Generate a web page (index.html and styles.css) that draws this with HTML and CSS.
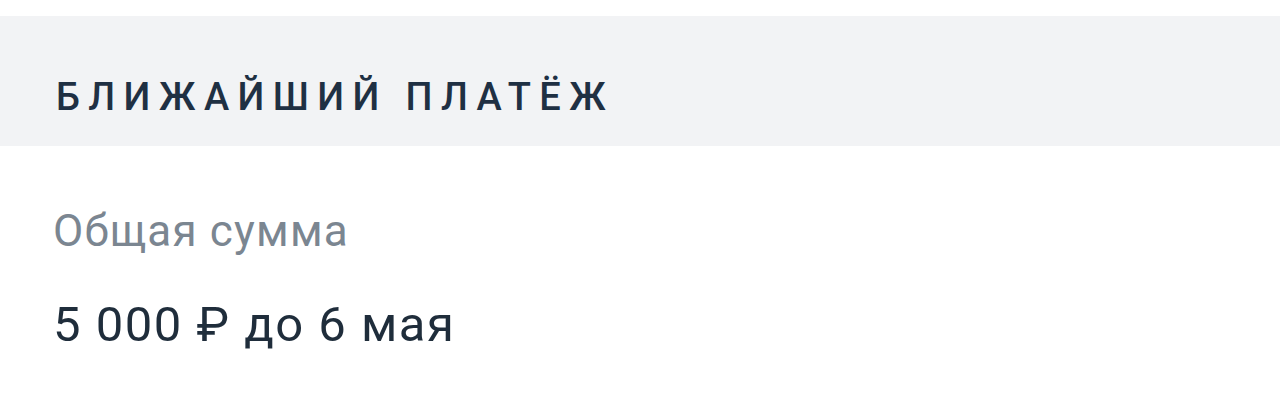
FILE: index.html
```html
<!DOCTYPE html>
<html lang="ru">
<head>
<meta charset="utf-8">
<link rel="stylesheet" href="styles.css">
</head>
<body>
<div class="page">
  <div class="header">
    <h2 class="title">Ближайший платёж</h2>
  </div>
  <div class="content">
    <div class="label">Общая сумма</div>
    <div class="amount">5 000 ₽ до 6 мая</div>
  </div>
</div>
</body>
</html>
```
FILE: styles.css
```css
html, body {
  margin: 0;
  padding: 0;
  background: #ffffff;
}
.page {
  width: 1280px;
  height: 400px;
  padding-top: 16px;
  box-sizing: border-box;
  font-family: Roboto, "Noto Sans", sans-serif;
}
.header {
  height: 130px;
  background: #f2f3f5;
  padding: 62px 0 0 56px;
  box-sizing: border-box;
}
.title {
  margin: 0;
  font-size: 38px;
  font-weight: 500;
  text-transform: uppercase;
  letter-spacing: 8.4px;
  color: #1f3043;
  line-height: 1;
}
.content {
  padding: 63px 0 0 53px;
  display: flex;
  flex-direction: column;
  gap: 47px;
}
.label {
  font-size: 44px;
  letter-spacing: 1.2px;
  color: #7b8691;
  line-height: 1;
}
.amount {
  font-size: 49px;
  letter-spacing: 1.5px;
  color: #1f2d3b;
  line-height: 1;
}
```
